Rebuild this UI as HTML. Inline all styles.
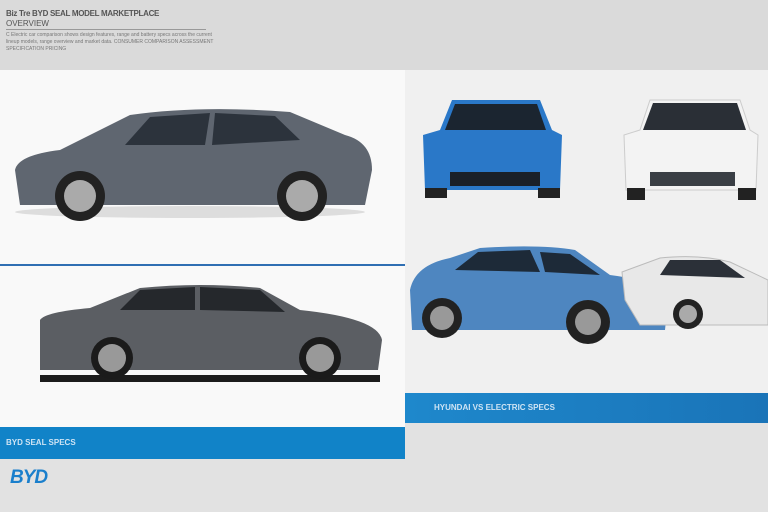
<!DOCTYPE html>
<html><head><style>
body{margin:0;width:768px;height:512px;overflow:hidden;background:#e2e2e2;font-family:"Liberation Sans",sans-serif;position:relative}
.a{position:absolute}
</style></head><body>
<div class="a" style="left:0;top:0;width:768px;height:70px;background:#dadada"></div>
<div class="a" style="left:6px;top:9px;font-size:8px;color:#555;font-weight:bold;letter-spacing:-0.3px">Biz Tre BYD SEAL MODEL MARKETPLACE</div>
<div class="a" style="left:6px;top:19px;font-size:8px;color:#555">OVERVIEW</div>
<div class="a" style="left:6px;top:29px;width:200px;height:1px;background:#999"></div>
<div class="a" style="left:6px;top:32px;font-size:5px;color:#777;width:210px;line-height:7px">C Electric car comparison shows design features, range and battery specs across the current lineup models, range overview and market data. CONSUMER COMPARISON ASSESSMENT SPECIFICATION PRICING</div>
<div class="a" style="left:0;top:70px;width:405px;height:357px;background:#f9f9f9"></div>
<div class="a" style="left:0;top:264px;width:405px;height:2px;background:#2f6fb3"></div>
<div class="a" style="left:405px;top:70px;width:363px;height:323px;background:#f0f0f0"></div>
<div class="a" style="left:405px;top:393px;width:363px;height:30px;background:linear-gradient(90deg,#1e88cc,#1a74b8)"></div>
<div class="a" style="left:434px;top:403px;font-size:8px;color:#cfe4f4;font-weight:bold">HYUNDAI VS ELECTRIC SPECS</div>
<div class="a" style="left:0;top:427px;width:405px;height:32px;background:#1183c8"></div>
<div class="a" style="left:6px;top:438px;font-size:8px;color:#cfe4f4;font-weight:bold">BYD SEAL SPECS</div>
<div class="a" style="left:10px;top:467px;font-size:19px;color:#1a7fcc;font-weight:bold;font-style:italic;letter-spacing:-1px">BYD</div>
<svg class="a" style="left:0;top:0" width="768" height="512">
<!-- top left car -->
<path d="M15 170 Q18 155 60 150 L130 115 Q200 105 290 112 L345 135 Q372 142 372 170 L365 205 L20 205 Z" fill="#5f6670"/>
<path d="M125 145 L150 117 L210 113 L205 145 Z M212 145 L215 113 L275 116 L300 140 Z" fill="#2c333c"/>
<ellipse cx="190" cy="212" rx="175" ry="6" fill="#ddd"/>
<circle cx="80" cy="196" r="25" fill="#222"/><circle cx="80" cy="196" r="16" fill="#aaa"/>
<circle cx="302" cy="196" r="25" fill="#222"/><circle cx="302" cy="196" r="16" fill="#aaa"/>
<!-- bottom left car -->
<path d="M40 320 Q45 312 90 308 L140 288 Q200 282 260 288 L300 310 Q378 318 382 340 L378 370 L40 370 Z" fill="#5b5e63"/>
<path d="M120 310 L140 290 L195 287 L195 310 Z M200 310 L200 287 L260 290 L285 312 Z" fill="#25282c"/>
<rect x="40" y="375" width="340" height="7" fill="#1c1c1c"/>
<circle cx="112" cy="358" r="21" fill="#1b1b1b"/><circle cx="112" cy="358" r="14" fill="#999"/>
<circle cx="320" cy="358" r="21" fill="#1b1b1b"/><circle cx="320" cy="358" r="14" fill="#999"/>
<!-- blue front car -->
<path d="M440 130 L452 100 L540 100 L552 130 L562 135 L560 190 L425 190 L423 135 Z" fill="#2a78c8"/>
<path d="M445 130 L455 104 L537 104 L546 130 Z" fill="#1b2530"/>
<rect x="450" y="172" width="90" height="14" fill="#1a2028"/>
<rect x="425" y="188" width="22" height="10" fill="#222"/><rect x="538" y="188" width="22" height="10" fill="#222"/>
<!-- white front car -->
<path d="M640 130 L650 100 L740 100 L750 130 L758 135 L756 190 L626 190 L624 135 Z" fill="#f3f3f3" stroke="#ccc"/>
<path d="M643 130 L653 103 L737 103 L746 130 Z" fill="#2a2f36"/>
<rect x="650" y="172" width="85" height="14" fill="#3a3f45"/>
<rect x="627" y="188" width="18" height="12" fill="#222"/><rect x="738" y="188" width="18" height="12" fill="#222"/>
<!-- blue side car -->
<path d="M410 290 Q415 265 450 258 L480 248 Q540 244 575 250 L610 275 Q665 282 668 300 L665 330 L412 330 Z" fill="#4e86c0"/>
<path d="M455 270 L478 252 L530 250 L540 272 Z M545 272 L540 252 L570 254 L600 275 Z" fill="#1d2a38"/>
<circle cx="442" cy="318" r="20" fill="#222"/><circle cx="442" cy="318" r="12" fill="#999"/>
<circle cx="588" cy="322" r="22" fill="#222"/><circle cx="588" cy="322" r="13" fill="#999"/>
<!-- white side car -->
<path d="M622 272 L660 258 Q700 254 730 262 L768 280 L768 325 L640 325 L625 300 Z" fill="#e8e8e8" stroke="#bbb"/>
<path d="M660 275 L670 260 L720 260 L745 278 Z" fill="#2b3038"/>
<circle cx="688" cy="314" r="15" fill="#222"/><circle cx="688" cy="314" r="9" fill="#aaa"/>
</svg>
</body></html>
